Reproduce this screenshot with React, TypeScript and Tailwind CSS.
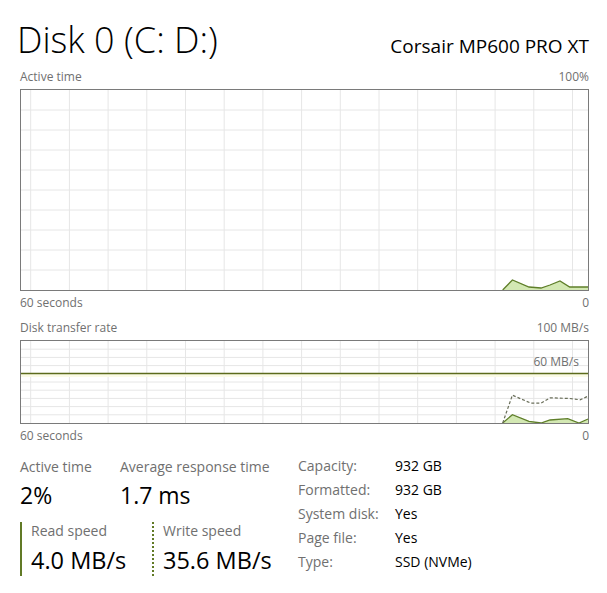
import React from "react";

const font = { fontFamily: '"Open Sans", "Noto Sans", sans-serif' };

function Grid({ w, h, rows, colW, offset }: { w: number; h: number; rows: number; colW: number; offset: number }) {
    const lines = [];
    for (let i = 1; i < rows; i++) {
        const y = (h / rows) * i;
        lines.push(<line key={"h" + i} x1={0} x2={w} y1={y} y2={y} stroke="#e6e6e6" strokeWidth={1} />);
    }
    for (let x = offset; x < w; x += colW) {
        lines.push(<line key={"v" + x} x1={x} x2={x} y1={0} y2={h} stroke="#e6e6e6" strokeWidth={1} />);
    }
    return <>{lines}</>;
}

function ActiveChart() {
    const w = 567;
    const h = 200;
    const pts = "481.7,200 491.4,190 508,197 520,198 529,195 539,191 548.7,197 567,197";
    return (
        <svg width={w + 2} height={h + 2} className="block">
            <g transform="translate(1,1)">
                <Grid w={w} h={h} rows={10} colW={38.7} offset={9.7} />
                <polygon points={pts + " 567,200"} fill="#d3e8b3" />
                <polyline points={pts} fill="none" stroke="#5f7f2a" strokeWidth={1.3} />
            </g>
            <rect x={0.5} y={0.5} width={w + 1} height={h + 1} fill="none" stroke="#7a7a7a" />
        </svg>
    );
}

function TransferChart() {
    const w = 567;
    const h = 82;
    const read = "481.7,82 491.4,73.7 508,80.3 520,82 529,79 546.7,77.7 558,82 567,78";
    const write = "481.7,82 491.4,54.2 510,62.2 520,62.2 529,56.8 548.7,57.5 559,58.8 567,55.2";
    return (
        <svg width={w + 2} height={h + 2} className="block">
            <g transform="translate(1,1)">
                <Grid w={w} h={h} rows={10} colW={38.7} offset={9.7} />
                <rect x={0} y={33} width={w} height={3} fill="#fbfbe6" />
                <line x1={0} x2={w} y1={32.5} y2={32.5} stroke="#5c6b1c" strokeWidth={1.3} />
                <polygon points={read + " 567,82"} fill="#d3e8b3" />
                <polyline points={read} fill="none" stroke="#5f7f2a" strokeWidth={1.3} />
                <polyline points={write} fill="none" stroke="#6a6f5a" strokeWidth={1.2} strokeDasharray="3 2" />
            </g>
            <rect x={0.5} y={0.5} width={w + 1} height={h + 1} fill="none" stroke="#7a7a7a" />
            <text x={559} y={26} textAnchor="end" fontSize={12} fill="#707070" style={font}>
                60 MB/s
            </text>
        </svg>
    );
}

const specs = [
    ["Capacity:", "932 GB"],
    ["Formatted:", "932 GB"],
    ["System disk:", "Yes"],
    ["Page file:", "Yes"],
    ["Type:", "SSD (NVMe)"],
];

export default function App() {
    return (
        <div className="w-[607px] h-[593px] bg-white overflow-hidden pl-[20px] pr-[18px]" style={font}>
            <div className="flex justify-between items-end h-[60px]">
                <h1 className="text-[36px] font-light leading-none text-black -ml-[3px] pb-[2px]">Disk 0 (C: D:)</h1>
                <div className="text-[19px] leading-none text-black pb-[4px]">Corsair MP600 PRO XT</div>
            </div>

            <div className="flex justify-between text-[12px] text-[#707070] leading-[16px] mt-[9px] mb-[4px]">
                <span>Active time</span>
                <span>100%</span>
            </div>
            <ActiveChart />
            <div className="flex justify-between text-[12px] text-[#707070] leading-[16px] mt-[4px]">
                <span>60 seconds</span>
                <span>0</span>
            </div>

            <div className="flex justify-between text-[12px] text-[#707070] leading-[16px] mt-[9px] mb-[4px]">
                <span>Disk transfer rate</span>
                <span>100 MB/s</span>
            </div>
            <TransferChart />
            <div className="flex justify-between text-[12px] text-[#707070] leading-[16px] mt-[4px]">
                <span>60 seconds</span>
                <span>0</span>
            </div>

            <div className="flex mt-[14px]">
                <div className="w-[278px]">
                    <div className="flex h-[56px]">
                        <div className="w-[100px]">
                            <div className="text-[14px] leading-[18px] text-[#707070]">Active time</div>
                            <div className="text-[23px] leading-[38px] text-black">2%</div>
                        </div>
                        <div>
                            <div className="text-[14px] leading-[18px] text-[#707070]">Average response time</div>
                            <div className="text-[23px] leading-[38px] text-black">1.7 ms</div>
                        </div>
                    </div>
                    <div className="flex mt-[8px]">
                        <div className="w-[132px] border-l-2 border-[#617a26] pl-[9px] h-[54px]">
                            <div className="text-[14px] leading-[18px] text-[#707070]">Read speed</div>
                            <div className="text-[23.5px] leading-[40px] text-black">4.0 MB/s</div>
                        </div>
                        <div className="border-l-2 border-dotted border-[#617a26] pl-[9px] h-[54px]">
                            <div className="text-[14px] leading-[18px] text-[#707070]">Write speed</div>
                            <div className="text-[23.5px] leading-[40px] text-black whitespace-nowrap">35.6 MB/s</div>
                        </div>
                    </div>
                </div>
                <div className="flex flex-col gap-[6px] -mt-[1px]">
                    {specs.map(([k, v]) => (
                        <div key={k} className="flex text-[14px] leading-[18px]">
                            <span className="w-[97px] text-[#707070]">{k}</span>
                            <span className="text-black">{v}</span>
                        </div>
                    ))}
                </div>
            </div>
        </div>
    );
}
